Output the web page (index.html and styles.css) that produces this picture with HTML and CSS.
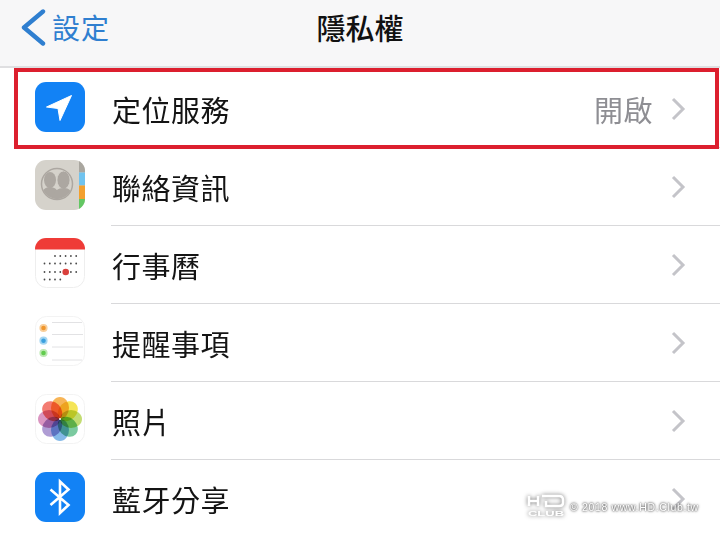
FILE: index.html
```html
<!DOCTYPE html>
<html lang="zh-Hant">
<head>
<meta charset="utf-8">
<title>隱私權</title>
<link rel="stylesheet" href="styles.css">
</head>
<body>
<div class="screen">
  <header class="nav">
    <div class="back">
      <svg class="back-icon" width="26" height="38" viewBox="0 0 26 38"><path d="M23 3.500 L4 19.500 L23 35.500" fill="none" stroke="#2f7fd0" stroke-width="4.400" stroke-linecap="round" stroke-linejoin="round"/></svg>
      <span>設定</span>
    </div>
    <h1 class="title">隱私權</h1>
  </header>
  <ul class="list">
    <li class="row">
      <svg class="icon" viewBox="0 0 50 50"><rect width="50" height="50" rx="11" fill="#1282f5"/><path d="M36.500 13.500 L11.500 25 L23 26.500 L25 38.500 Z" fill="#fff" stroke="#fff" stroke-width="1" stroke-linejoin="round"/></svg>
      <div class="row-body"><span class="label">定位服務</span><span class="value">開啟</span><svg class="chevron" width="16" height="24" viewBox="0 0 16 24"><path d="M3 2 L13 12 L3 22" fill="none" stroke="#c4c4c9" stroke-width="3"/></svg></div>
    </li>
    <li class="row">
      <svg class="icon" viewBox="0 0 50 50"><defs><clipPath id="c1"><rect width="50" height="50" rx="11"/></clipPath><clipPath id="c2"><circle cx="22" cy="24" r="15"/></clipPath></defs><g clip-path="url(#c1)"><rect width="50" height="50" fill="#d5d2cb"/><rect x="44" width="6" height="12.500" fill="#a9a69f"/><rect x="44" y="12.500" width="6" height="13" fill="#70c3ef"/><rect x="44" y="25.500" width="6" height="13.500" fill="#f3a02f"/><rect x="44" y="39" width="6" height="11" fill="#63c763"/><circle cx="22" cy="24" r="15.500" fill="none" stroke="#aca7a1" stroke-width="1.500"/><g clip-path="url(#c2)"><ellipse cx="15" cy="20" rx="6" ry="8" fill="#aca7a1"/><path d="M4 40 C5 31 10 27 15 27 C20 27 25 31 26 40 Z" fill="#aca7a1"/><ellipse cx="28.500" cy="20" rx="6.500" ry="9" fill="#aca7a1" stroke="#d5d2cb" stroke-width=".8"/><path d="M17 41 C18 31 23 28 28.500 28 C34 28 38 31 39 41 Z" fill="#aca7a1"/></g></g></svg>
      <div class="row-body"><span class="label">聯絡資訊</span><svg class="chevron" width="16" height="24" viewBox="0 0 16 24"><path d="M3 2 L13 12 L3 22" fill="none" stroke="#c4c4c9" stroke-width="3"/></svg></div>
    </li>
    <li class="row">
      <svg class="icon" viewBox="0 0 50 50"><rect x=".5" y=".5" width="49" height="49" rx="11" fill="#fff" stroke="#eeeeee"/><path d="M0 11 A11 11 0 0 1 11 0 H39 A11 11 0 0 1 50 11 V11.500 H0 Z" fill="#ef3b37"/><g fill="#4a4a4a"><circle cx="20" cy="18" r=".9"/><circle cx="25.300" cy="18" r=".9"/><circle cx="30.600" cy="18" r=".9"/><circle cx="35.900" cy="18" r=".9"/><circle cx="41.200" cy="18" r=".9"/><circle cx="9.500" cy="25.500" r=".9"/><circle cx="14.800" cy="25.500" r=".9"/><circle cx="20" cy="25.500" r=".9"/><circle cx="25.300" cy="25.500" r=".9"/><circle cx="30.600" cy="25.500" r=".9"/><circle cx="35.900" cy="25.500" r=".9"/><circle cx="41.200" cy="25.500" r=".9"/><circle cx="9.500" cy="34" r=".9"/><circle cx="14.800" cy="34" r=".9"/><circle cx="20" cy="34" r=".9"/><circle cx="25.300" cy="34" r=".9"/><circle cx="35.900" cy="34" r=".9"/><circle cx="41.200" cy="34" r=".9"/><circle cx="9.500" cy="41.500" r=".9"/><circle cx="14.800" cy="41.500" r=".9"/><circle cx="20" cy="41.500" r=".9"/><circle cx="25.300" cy="41.500" r=".9"/></g><circle cx="30.700" cy="34" r="3.300" fill="#d9403c"/></svg>
      <div class="row-body"><span class="label">行事曆</span><svg class="chevron" width="16" height="24" viewBox="0 0 16 24"><path d="M3 2 L13 12 L3 22" fill="none" stroke="#c4c4c9" stroke-width="3"/></svg></div>
    </li>
    <li class="row">
      <svg class="icon" viewBox="0 0 50 50"><rect x=".5" y=".5" width="49" height="49" rx="11" fill="#fff" stroke="#f3f3f3"/><g stroke="#e2e2e4" stroke-width="1"><path d="M17 6.500 H47"/><path d="M17 18.500 H48"/><path d="M17 31 H48"/><path d="M17 44 H47"/></g><circle cx="8.500" cy="12" r="3.200" fill="#f0962c" stroke="#f8cf9c" stroke-width="1.800"/><circle cx="8.500" cy="24.700" r="3.200" fill="#3aa0df" stroke="#a5d6f2" stroke-width="1.800"/><circle cx="8.500" cy="37" r="3.200" fill="#62cc4e" stroke="#bce9b2" stroke-width="1.800"/></svg>
      <div class="row-body"><span class="label">提醒事項</span><svg class="chevron" width="16" height="24" viewBox="0 0 16 24"><path d="M3 2 L13 12 L3 22" fill="none" stroke="#c4c4c9" stroke-width="3"/></svg></div>
    </li>
    <li class="row">
      <svg class="icon" viewBox="0 0 50 50"><rect x=".5" y=".5" width="49" height="49" rx="11" fill="#fff" stroke="#f3f3f3"/><g class="petals"><ellipse cx="25" cy="14" rx="9" ry="11" fill="#f7ad45"/><ellipse cx="25" cy="14" rx="9" ry="11" fill="#f4e244" transform="rotate(45 25 25)"/><ellipse cx="25" cy="14" rx="9" ry="11" fill="#bcd862" transform="rotate(90 25 25)"/><ellipse cx="25" cy="14" rx="9" ry="11" fill="#6cc596" transform="rotate(135 25 25)"/><ellipse cx="25" cy="14" rx="9" ry="11" fill="#78b2e6" transform="rotate(180 25 25)"/><ellipse cx="25" cy="14" rx="9" ry="11" fill="#a692d0" transform="rotate(225 25 25)"/><ellipse cx="25" cy="14" rx="9" ry="11" fill="#d68aba" transform="rotate(270 25 25)"/><ellipse cx="25" cy="14" rx="9" ry="11" fill="#f26e62" transform="rotate(315 25 25)"/></g><circle cx="25" cy="25" r="1" fill="#fff"/></svg>
      <div class="row-body"><span class="label">照片</span><svg class="chevron" width="16" height="24" viewBox="0 0 16 24"><path d="M3 2 L13 12 L3 22" fill="none" stroke="#c4c4c9" stroke-width="3"/></svg></div>
    </li>
    <li class="row">
      <svg class="icon" viewBox="0 0 50 50"><rect width="50" height="50" rx="11" fill="#1282f5"/><path d="M15.500 17.500 L33.500 33 L25 41 V9.500 L33.500 17.500 L15.500 33" fill="none" stroke="#fff" stroke-width="2.600" stroke-linejoin="miter"/></svg>
      <div class="row-body"><span class="label">藍牙分享</span><svg class="chevron" width="16" height="24" viewBox="0 0 16 24"><path d="M3 2 L13 12 L3 22" fill="none" stroke="#c4c4c9" stroke-width="3"/></svg></div>
    </li>
  </ul>
  <div class="highlight"></div>
  <div class="watermark">
    <svg class="wm-logo" width="38" height="22" viewBox="0 0 38 22"><path d="M2 1 V11 M2 6 H11 M11 1 V11 M15 1 H32 Q36 1 36 5 V8 Q36 11 32 11 H19 V6" fill="none" stroke="#fff" stroke-width="2.500"/><text x="1" y="21" class="wm-club" textLength="36" lengthAdjust="spacingAndGlyphs">CLUB</text></svg>
    <span class="wm-text">© 2018 www.HD.Club.tw</span>
  </div>
</div>
</body>
</html>
```

FILE: styles.css
```css
* { box-sizing: border-box; }
html, body { margin: 0; padding: 0; background: #fff; }
.screen {
  position: relative;
  width: 720px;
  height: 536px;
  overflow: hidden;
  font-family: "Noto Sans CJK TC", "Noto Sans", sans-serif;
  background: #fff;
}
.nav {
  position: relative;
  height: 68px;
  background: #f7f7f8;
  border-bottom: 2px solid #dfdfe1;
  display: flex;
  align-items: center;
  justify-content: center;
  padding-bottom: 12px;
}
.back {
  position: absolute;
  left: 20px;
  top: 8px;
  display: flex;
  align-items: center;
  gap: 6px;
  color: #2f7fd0;
  font-size: 28px;
  line-height: 38px;
  letter-spacing: 1px;
}
.back-icon { display: block; }
.title {
  margin: 0;
  font-size: 29px;
  font-weight: 500;
  line-height: 38px;
  letter-spacing: 0;
  color: #111;
}
.list {
  list-style: none;
  margin: 2px 0 0;
  padding: 0;
}
.row {
  height: 78px;
  display: flex;
  align-items: flex-start;
  padding-left: 35px;
}
.icon {
  width: 50px;
  height: 50px;
  margin-top: 12px;
  flex: none;
  display: block;
}
.row-body {
  flex: 1;
  height: 78px;
  margin-left: 26px;
  padding-right: 34px;
  display: flex;
  align-items: center;
  border-bottom: 1px solid #d9d9db;
}
.row:last-child .row-body { border-bottom: 0; }
.label {
  flex: 1;
  padding-left: 1px;
  font-size: 29px;
  line-height: 38px;
  letter-spacing: .5px;
  color: #141414;
}
.value {
  font-size: 29px;
  line-height: 38px;
  letter-spacing: .5px;
  color: #8e8e93;
  margin-right: 17px;
}
.chevron { flex: none; display: block; }
.petals { isolation: isolate; }
.petals ellipse { mix-blend-mode: multiply; opacity: .9; }
.highlight {
  position: absolute;
  left: 14px;
  top: 68px;
  width: 705px;
  height: 81px;
  border: 4.500px solid #dc1f2e;
}
.watermark {
  position: absolute;
  left: 527px;
  top: 495px;
  display: flex;
  align-items: flex-end;
  gap: 5px;
}
.wm-logo {
  display: block;
  overflow: visible;
  filter: drop-shadow(0 0 2px #666);
}
.wm-club {
  font-family: "Liberation Sans", sans-serif;
  font-size: 8px;
  font-weight: 700;
  fill: #fff;
}
.wm-text {
  font-family: "Liberation Sans", sans-serif;
  font-size: 10.500px;
  line-height: 12px;
  letter-spacing: .65px;
  color: #fff;
  text-shadow: 0 0 2px #444, 0 0 3px #666;
  margin-bottom: 4px;
  white-space: nowrap;
}
```
